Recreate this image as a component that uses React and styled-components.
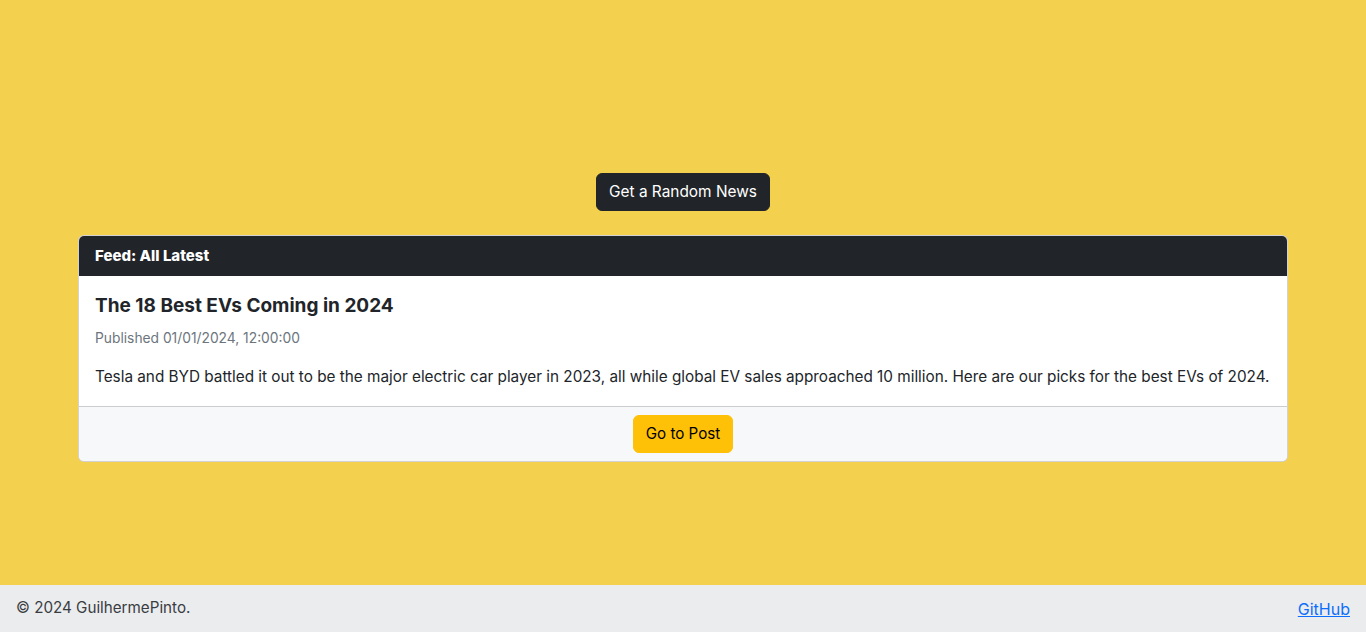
import React from "react";
import styled, { createGlobalStyle } from "styled-components";

const Global = createGlobalStyle`
  * { box-sizing: border-box; }
  html, body { margin: 0; padding: 0; }
  body {
    font-family: Inter, "Noto Sans", sans-serif;
    font-size: 16px;
    line-height: 1.5;
    color: #212529;
    background: #f4d04f;
  }
`;

const Page = styled.div`
  min-height: 632px;
  display: flex;
  flex-direction: column;
`;

const Main = styled.main`
  flex: 1;
  display: flex;
  flex-direction: column;
  align-items: center;
  padding: 173px 78px 0;
`;

const Button = styled.button`
  font-family: inherit;
  font-size: ${(p) => p.$size || "15.4px"};
  line-height: 24px;
  height: 38px;
  padding: 6px 12px;
  border: 1px solid ${(p) => p.$bg};
  border-radius: 6px;
  background: ${(p) => p.$bg};
  color: ${(p) => p.$fg};
  cursor: pointer;
`;

const Card = styled.section`
  margin-top: 24px;
  width: 100%;
  background: #fff;
  border: 1px solid rgba(0, 0, 0, 0.175);
  border-radius: 6px;
  overflow: hidden;
`;

const CardHeader = styled.header`
  background: #212529;
  color: #fff;
  font-weight: 800;
  font-size: 15px;
  line-height: 24px;
  padding: 8px 16px;
`;

const CardBody = styled.div`
  display: flex;
  flex-direction: column;
  padding: 18px 16px 17px;
`;

const Title = styled.h5`
  margin: 0 0 10px;
  font-size: 19px;
  font-weight: 700;
  line-height: 24px;
`;

const Subtitle = styled.h6`
  margin: 0 0 16px;
  font-size: 13.8px;
  font-weight: 400;
  line-height: 21px;
  color: #6c757d;
`;

const Text = styled.p`
  margin: 0;
  font-size: 15.3px;
  line-height: 24px;
`;

const CardFooter = styled.footer`
  background: #f7f8fa;
  border-top: 1px solid rgba(0, 0, 0, 0.175);
  padding: 8px 16px;
  display: flex;
  justify-content: center;
`;

const Footer = styled.footer`
  background: #ebecee;
  height: 47px;
  padding: 0 16px;
  display: flex;
  align-items: center;
  justify-content: space-between;
  font-size: 15.2px;
  color: #393d42;
`;

const Link = styled.a`
  color: #0d6efd;
  text-decoration: underline;
  font-size: 16px;
`;

export default function App() {
  return (
    <Page>
      <Global />
      <Main>
        <Button $bg="#212529" $fg="#fff">Get a Random News</Button>
        <Card>
          <CardHeader>Feed: All Latest</CardHeader>
          <CardBody>
            <Title>The 18 Best EVs Coming in 2024</Title>
            <Subtitle>Published 01/01/2024, 12:00:00</Subtitle>
            <Text>
              Tesla and BYD battled it out to be the major electric car player in 2023, all while global EV sales approached 10 million. Here are our picks for the best EVs of 2024.
            </Text>
          </CardBody>
          <CardFooter>
            <Button $bg="#ffc107" $fg="#000" $size="15.2px">Go to Post</Button>
          </CardFooter>
        </Card>
      </Main>
      <Footer>
        <span>© 2024 GuilhermePinto.</span>
        <Link href="#">GitHub</Link>
      </Footer>
    </Page>
  );
}
